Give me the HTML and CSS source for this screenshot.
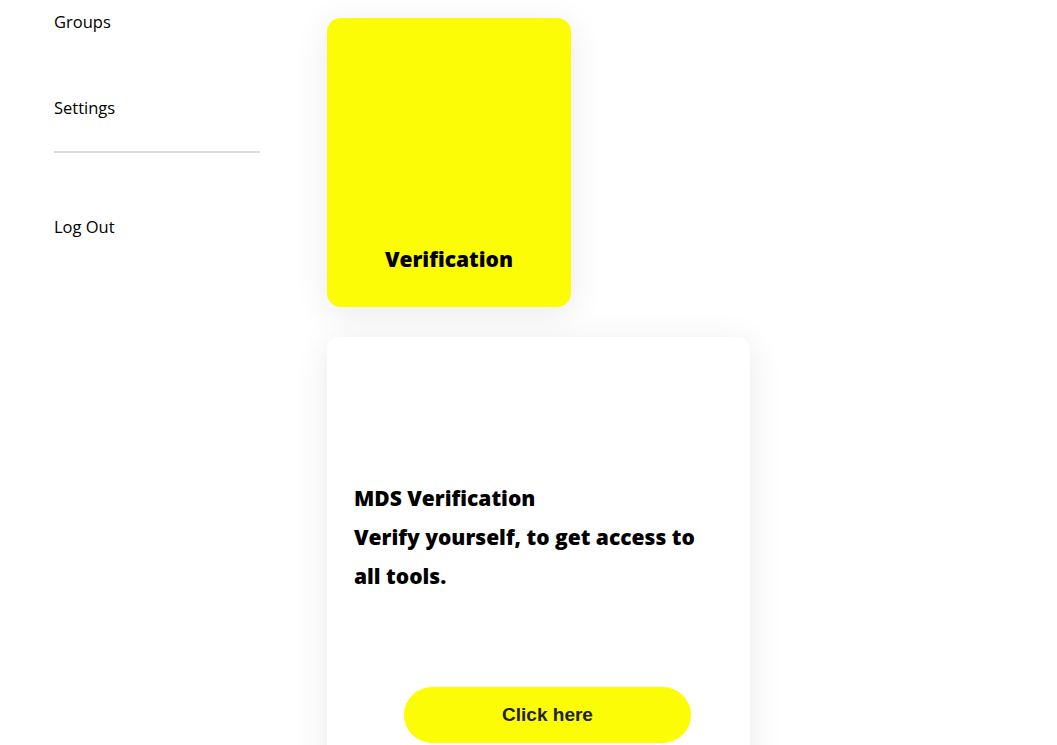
FILE: index.html
```html
<!DOCTYPE html>
<html lang="en">
<head>
    <meta charset="UTF-8">
    <meta name="viewport" content="width=device-width, initial-scale=1.0">
    <title>Verification</title>
    <link rel="stylesheet" href="styles.css">
</head>
<body>
    <div class="page">
        <nav class="sidebar">
            <ul>
                <li><a href="#">Groups</a></li>
                <li><a href="#">Settings</a></li>
            </ul>
            <hr class="divider">
            <a href="#" class="logout">Log Out</a>
        </nav>

        <main class="content">
            <section class="tile">
                <h2>Verification</h2>
            </section>

            <section class="card">
                <p class="card-text">MDS Verification<br>Verify yourself, to get access to all tools.</p>
                <button class="card-button">Click here</button>
            </section>
        </main>
    </div>
</body>
</html>
```

FILE: styles.css
```css
body{
    margin: 0;
    background-color: #fff;
    font-family: 'Open Sans', 'Noto Sans', sans-serif;
    color: #000;
}

.page{
    display: flex;
}

.sidebar{
    width: 206px;
    padding: 10px 0 0 54px;
    flex-shrink: 0;
}

.sidebar ul{
    list-style: none;
    margin: 0;
    padding: 0;
}

.sidebar li{
    line-height: 24px;
    margin-bottom: 62px;
}

.sidebar li:last-child{
    margin-bottom: 31px;
}

.sidebar a{
    color: #000;
    text-decoration: none;
    font-size: 16.5px;
    line-height: 24px;
}

.divider{
    border: none;
    height: 2px;
    background-color: #dcdcdf;
    margin: 0 0 62px 0;
}

.logout{
    display: block;
}

.content{
    padding: 18px 0 0 67px;
    display: flex;
    flex-direction: column;
    gap: 30px;
}

.tile{
    width: 244px;
    height: 289px;
    box-sizing: border-box;
    background-color: #fcfc07;
    border-radius: 14px;
    box-shadow: 0 6px 34px rgba(0, 0, 0, 0.09);
    display: flex;
    flex-direction: column;
    justify-content: flex-end;
    align-items: center;
    padding-bottom: 34px;
}

.tile h2{
    margin: 0;
    font-size: 21px;
    font-weight: 800;
    line-height: 28px;
}

.card{
    width: 423px;
    box-sizing: border-box;
    background-color: #fff;
    border-radius: 12px;
    box-shadow: 0 6px 34px rgba(0, 0, 0, 0.09);
    padding: 142px 27px 40px 27px;
}

.card-text{
    margin: 0 0 91px 0;
    font-size: 21px;
    font-weight: 800;
    line-height: 39px;
}

.card-button{
    display: block;
    width: 287px;
    height: 56px;
    margin-left: 50px;
    border: none;
    border-radius: 28px;
    background-color: #fcfc07;
    color: #222;
    font-family: 'Liberation Sans', Arial, sans-serif;
    font-weight: bold;
    font-size: 19px;
    cursor: pointer;
}
```
